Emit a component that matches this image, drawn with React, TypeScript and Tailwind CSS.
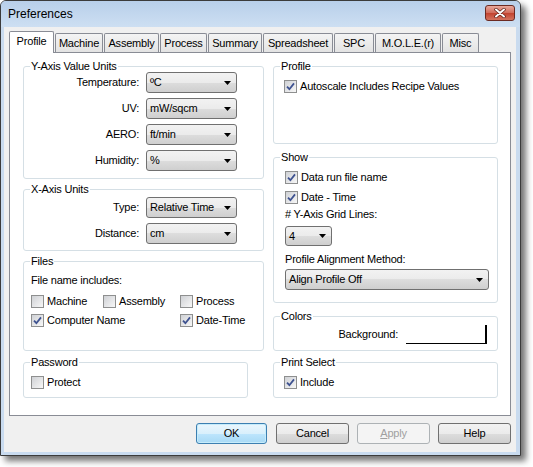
import type { ReactNode } from "react";

const TABS = [
  { label: "Profile", w: "w-[45px]" },
  { label: "Machine", w: "w-[48px]" },
  { label: "Assembly", w: "w-[55px]" },
  { label: "Process", w: "w-[47px]" },
  { label: "Summary", w: "w-[54px]" },
  { label: "Spreadsheet", w: "w-[70px]" },
  { label: "SPC", w: "w-[40px]" },
  { label: "M.O.L.E.(r)", w: "w-[66px]" },
  { label: "Misc", w: "w-[37px]" },
];

function Checkbox({ checked, label }: { checked?: boolean; label: string }) {
  return (
    <div className="flex items-center h-[14px] gap-[3px]">
      <span className="w-[13px] h-[13px] shrink-0 border border-[#8e8f8f] bg-[linear-gradient(135deg,#cfd1d5,#f7f7f7)] flex items-center justify-center">
        {checked && (
          <svg width="9" height="9" viewBox="0 0 9 9">
            <path d="M1 4.6 L3.4 7.2 L8 1.4" stroke="#3e5290" strokeWidth="1.8" fill="none" />
          </svg>
        )}
      </span>
      <span className="leading-[14px] whitespace-nowrap">{label}</span>
    </div>
  );
}

function Combo({ value, w, h = "h-[21px]" }: { value: string; w: string; h?: string }) {
  return (
    <div
      className={`${w} ${h} shrink-0 border border-[#707070] rounded-[3px] bg-[linear-gradient(#f2f2f2,#ebebeb_50%,#dddddd_50%,#cfcfcf)] flex items-center justify-between pl-[3px] pr-[5px]`}
    >
      <span className="leading-[13px]">{value}</span>
      <svg width="7" height="4" viewBox="0 0 7 4">
        <path d="M0 0H7L3.5 4Z" fill="#000" />
      </svg>
    </div>
  );
}

function Group({ title, className, children }: { title: string; className: string; children?: ReactNode }) {
  return (
    <div className={`relative border border-[#d5dfe5] rounded-[3px] ${className}`}>
      <span className="absolute left-[6px] -top-[7px] px-[1px] bg-white leading-[13px] whitespace-nowrap">
        {title}
      </span>
      {children}
    </div>
  );
}

function LabeledCombo({ label, value }: { label: string; value: string }) {
  return (
    <div className="flex items-center">
      <span className="w-[115px] text-right mr-[7px]">{label}</span>
      <Combo value={value} w="w-[91px]" />
    </div>
  );
}

function Button({ children, kind, w }: { children: ReactNode; kind?: "default" | "disabled"; w: string }) {
  const look =
    kind === "default"
      ? "border-[#3c7fb1] bg-[linear-gradient(#eaf6fd,#d9f0fc_50%,#bee6fd_50%,#a7d9f5)] shadow-[inset_0_0_0_1px_#c6ecfb]"
      : kind === "disabled"
        ? "border-[#adb2b5] bg-[#f4f4f4] text-[#a0a0a0]"
        : "border-[#707070] bg-[linear-gradient(#f2f2f2,#ebebeb_50%,#dddddd_50%,#cfcfcf)]";
  return (
    <div className={`${w} h-[21px] border rounded-[3px] flex items-center justify-center ${look}`}>
      {children}
    </div>
  );
}

export default function App() {
  return (
    <div className="w-[533px] h-[467px] bg-white font-['Liberation_Sans',Arial,sans-serif] text-[11px] tracking-[-0.2px] text-black">
      <div className="w-[521px] h-[456px] flex flex-col border border-[#3b3b3b] rounded-t-[6px] bg-[#c9dbef] shadow-[5px_5px_6px_0px_rgba(0,0,0,0.55)]">
        {/* Title bar */}
        <div className="h-[26px] flex items-start justify-between rounded-t-[5px] bg-[linear-gradient(#b8cfea,#cddff2)]">
          <span className="ml-[7px] mt-[6px] text-[12px] leading-[15px] tracking-normal">Preferences</span>
          <div className="mt-[4px] mr-[5px] w-[30px] h-[16px] rounded-[3px] border border-[#6b2a22] bg-[linear-gradient(#e8a89c,#d06a5a_50%,#c2412e_50%,#d3735f)] flex items-center justify-center">
            <svg width="12" height="10" viewBox="0 0 12 10">
              <path d="M2 1.5 L10 8.5 M10 1.5 L2 8.5" stroke="#5a1d15" strokeWidth="3.4" strokeLinecap="round" />
              <path d="M2 1.5 L10 8.5 M10 1.5 L2 8.5" stroke="#fff" strokeWidth="2" strokeLinecap="round" />
            </svg>
          </div>
        </div>

        {/* Client area */}
        <div className="ml-[3px] mr-[4px] h-[425px] bg-[#f0f0f0] pt-[4px] pl-[5px] pr-[5px] flex flex-col">
          {/* Tabs */}
          <div className="h-[21px] flex items-end gap-[1px]">
            {TABS.map((t, i) =>
              i === 0 ? (
                <div
                  key={t.label}
                  className={`${t.w} h-[22px] -mb-px relative z-10 border border-b-0 border-[#898c95] rounded-t-[2px] bg-white flex items-center justify-center pb-[2px]`}
                >
                  {t.label}
                </div>
              ) : (
                <div
                  key={t.label}
                  className={`${t.w} h-[19px] border border-b-0 border-[#898c95] rounded-t-[2px] bg-[linear-gradient(#f4f4f4,#e3e3e3)] flex items-center justify-center`}
                >
                  {t.label}
                </div>
              )
            )}
          </div>

          {/* Tab page */}
          <div className="h-[364px] border border-[#898c95] bg-white pt-[13px] pl-[13px] flex gap-[9px]">
            {/* Left column */}
            <div className="w-[241px] flex flex-col">
              <Group title="Y-Axis Value Units" className="h-[113px] pt-[5px] flex flex-col gap-[5px]">
                <LabeledCombo label="Temperature:" value="ºC" />
                <LabeledCombo label="UV:" value="mW/sqcm" />
                <LabeledCombo label="AERO:" value="ft/min" />
                <LabeledCombo label="Humidity:" value="%" />
              </Group>
              <Group title="X-Axis Units" className="mt-[10px] h-[62px] pt-[7px] flex flex-col gap-[5px]">
                <LabeledCombo label="Type:" value="Relative Time" />
                <LabeledCombo label="Distance:" value="cm" />
              </Group>
              <Group title="Files" className="mt-[10px] h-[90px] pl-[7px]">
                <div className="mt-[11px] leading-[14px]">File name includes:</div>
                <div className="mt-[7px] grid grid-cols-[72px_77px_1fr] gap-y-[5px]">
                  <Checkbox label="Machine" />
                  <Checkbox label="Assembly" />
                  <Checkbox label="Process" />
                  <Checkbox label="Computer Name" checked />
                  <span />
                  <Checkbox label="Date-Time" checked />
                </div>
              </Group>
              <Group title="Password" className="mt-[11px] w-[225px] h-[36px] pl-[7px] pt-[12px]">
                <Checkbox label="Protect" />
              </Group>
            </div>

            {/* Right column */}
            <div className="w-[225px] flex flex-col">
              <Group title="Profile" className="h-[78px] pl-[10px] pt-[12px]">
                <Checkbox label="Autoscale Includes Recipe Values" checked />
              </Group>
              <Group title="Show" className="mt-[13px] h-[146px] pl-[11px] pt-[12px] flex flex-col">
                <Checkbox label="Data run file name" checked />
                <div className="mt-[6px]">
                  <Checkbox label="Date - Time" checked />
                </div>
                <div className="mt-[3px] leading-[14px]">
                  # Y-Axis Grid Lines:
                </div>
                <div className="mt-[5px]">
                  <Combo value="4" w="w-[47px]" h="h-[20px]" />
                </div>
                <div className="mt-[6px] leading-[14px]">Profile Alignment Method:</div>
                <div className="mt-[3px]">
                  <Combo value="Align Profile Off" w="w-[204px]" />
                </div>
              </Group>
              <Group title="Colors" className="mt-[13px] h-[35px] pt-[8px] pr-[10px] flex justify-end items-start gap-[8px]">
                <span className="leading-[19px]">Background:</span>
                <div className="w-[81px] h-[19px] bg-white border-r-2 border-b border-black" />
              </Group>
              <Group title="Print Select" className="mt-[11px] h-[36px] pl-[10px] pt-[12px]">
                <Checkbox label="Include" checked />
              </Group>
            </div>
          </div>

          {/* Buttons */}
          <div className="mt-[7px] flex justify-end gap-[8px]">
            <div className="mr-[1px]">
              <Button kind="default" w="w-[71px]">
                OK
              </Button>
            </div>
            <Button w="w-[73px]">Cancel</Button>
            <Button kind="disabled" w="w-[73px]">
              <span>
                <span className="underline">A</span>pply
              </span>
            </Button>
            <Button w="w-[73px]">Help</Button>
          </div>
        </div>
      </div>
    </div>
  );
}
